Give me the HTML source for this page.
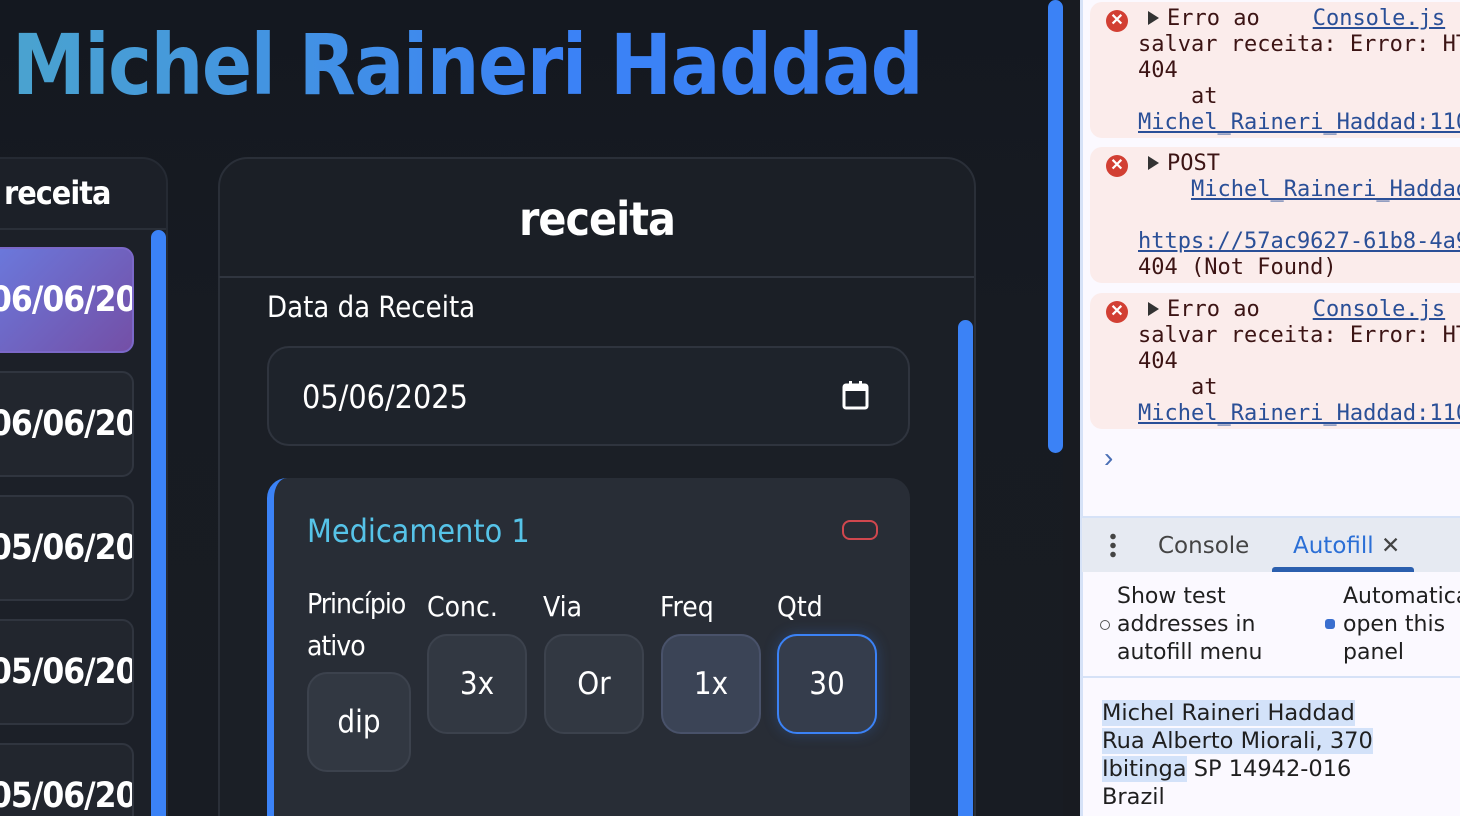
<!DOCTYPE html>
<html><head><meta charset="utf-8"><style>
*{margin:0;padding:0;box-sizing:border-box}
body{width:1460px;height:816px;overflow:hidden;position:relative;background:#13161d;font-family:"DejaVu Sans Condensed","Liberation Sans Narrow","Liberation Sans",sans-serif}
.a{position:absolute}
#left{position:absolute;left:0;top:0;width:1080px;height:816px;background:linear-gradient(180deg,#141820,#171b22 40%,#181c23);overflow:hidden}
.title{left:12px;top:16px;font-size:84px;font-weight:bold;white-space:nowrap;background:linear-gradient(90deg,#4aa3cf,#3b82f6 60%);-webkit-background-clip:text;color:transparent;letter-spacing:-1.5px;transform:scaleX(0.98);transform-origin:0 0}
.side{left:-40px;top:157px;width:208px;height:700px;border-radius:26px;background:#1c2028;border:2px solid #252a33}
.item{position:absolute;left:-20px;width:154px;height:106px;border-radius:12px;background:#22262e;border:2px solid #30353f;color:#fff;font-weight:bold;font-size:35px;line-height:102px;white-space:nowrap;text-indent:8px;letter-spacing:-1px;overflow:hidden}
.card{left:218px;top:157px;width:758px;height:700px;border-radius:30px;background:#1b1f26;border:2px solid #2a2f38}
.lbl{color:#fff;font-size:29px;position:absolute;white-space:nowrap}
.box{position:absolute;width:100px;height:100px;border-radius:20px;background:#323842;border:2px solid #3c424d;color:#fff;font-size:31px;text-align:center;line-height:96px}
.dt{position:absolute;left:1090px;width:370px;border-radius:12px 0 0 12px;background:#fbeceb;font-family:"DejaVu Sans Mono","Liberation Mono",monospace;font-size:22px;line-height:26px;color:#3c1414;white-space:nowrap;overflow:hidden}
.dt u{color:#2a4f97}
.x{position:absolute;left:16px;top:8px;width:22px;height:22px;border-radius:50%;background:#d23f33;color:#fff;font:bold 16px/22px "Liberation Sans",sans-serif;text-align:center}
.tri{display:inline-block;width:0;height:0;border-left:11px solid #333;border-top:7px solid transparent;border-bottom:7px solid transparent;margin:0 8px 0 10px}
.ui{font-family:"DejaVu Sans","Liberation Sans",sans-serif}
</style></head><body>
<div id="left">
<div class="a title">Michel Raineri Haddad</div>
<div class="a side"></div>
<div class="a" style="left:4px;top:174px;color:#fff;font-weight:bold;font-size:32px;letter-spacing:-1px">receita</div>
<div class="a" style="left:0;top:228px;width:166px;height:2px;background:#2a2f38"></div>
<div class="item" style="top:247px;background:linear-gradient(135deg,#6a7bdf,#744fa6);border-color:#7b68c8">06/06/2025</div>
<div class="item" style="top:371px">06/06/2025</div>
<div class="item" style="top:495px">05/06/2025</div>
<div class="item" style="top:619px">05/06/2025</div>
<div class="item" style="top:743px">05/06/2025</div>
<div class="a" style="left:151px;top:230px;width:15px;height:600px;border-radius:8px;background:#3b82f6"></div>
<div class="a card"></div>
<div class="a" style="left:218px;top:192px;width:758px;text-align:center;color:#fff;font-weight:bold;font-size:46px;letter-spacing:-1px">receita</div>
<div class="a" style="left:219px;top:276px;width:755px;height:2px;background:#30353f"></div>
<div class="lbl" style="left:267px;top:290px">Data da Receita</div>
<div class="a" style="left:267px;top:346px;width:643px;height:100px;border-radius:22px;background:#1e232b;border:2px solid #2f343e"></div>
<div class="lbl" style="left:302px;top:378px;font-size:32px">05/06/2025</div>
<svg class="a" style="left:842px;top:380px" width="28" height="30" viewBox="0 0 28 30"><rect x="2" y="5" width="23" height="23" rx="2" fill="none" stroke="#fff" stroke-width="3"/><rect x="2" y="5" width="23" height="6" fill="#fff"/><rect x="7" y="1" width="3" height="6" fill="#fff"/><rect x="17" y="1" width="3" height="6" fill="#fff"/></svg>
<div class="a" style="left:958px;top:320px;width:15px;height:520px;border-radius:8px;background:#3b82f6"></div>
<div class="a" style="left:267px;top:478px;width:643px;height:400px;border-radius:20px;background:#282d36;border-left:7px solid #3b82f6"></div>
<div class="lbl" style="left:307px;top:512px;color:#56c3e8;font-size:32px">Medicamento 1</div>
<div class="a" style="left:842px;top:520px;width:36px;height:20px;border-radius:8px;border:2px solid #d0474e"></div>
<div class="lbl" style="left:307px;top:583px;line-height:42px;font-size:28px;letter-spacing:-1px">Princípio<br>ativo</div>
<div class="lbl" style="left:427px;top:590px;font-size:28px">Conc.</div>
<div class="lbl" style="left:543px;top:590px;font-size:28px">Via</div>
<div class="lbl" style="left:660px;top:590px;font-size:28px">Freq</div>
<div class="lbl" style="left:777px;top:590px;font-size:28px">Qtd</div>
<div class="box" style="left:307px;top:672px;width:104px;overflow:hidden">dip</div>
<div class="box" style="left:427px;top:634px">3x</div>
<div class="box" style="left:544px;top:634px">Or</div>
<div class="box" style="left:661px;top:634px;background:#3b4456;border-color:#49526a">1x</div>
<div class="box" style="left:777px;top:634px;background:#353d4c;border-color:#3b82f6;box-shadow:0 0 14px rgba(59,130,246,.25)">30</div>
<div class="a" style="left:1048px;top:0;width:15px;height:453px;border-radius:8px;background:#3b82f6"></div>
<div class="a" style="left:1063px;top:0;width:17px;height:816px;background:#181b21"></div>
</div>
<div class="a" style="left:1080px;top:0;width:380px;height:816px;background:#fbf9ff;border-left:3px solid #d6e2f7"></div>
<div class="dt" style="top:2px;height:136px;padding:4px 0 0 48px"><div class="x">✕</div><span class="tri"></span>Erro ao &nbsp;&nbsp;&nbsp;<u>Console.js</u><br>salvar receita: Error: HTTP<br>404<br>&nbsp;&nbsp;&nbsp;&nbsp;at<br><u>Michel_Raineri_Haddad:110</u></div>
<div class="dt" style="top:147px;height:136px;padding:4px 0 0 48px"><div class="x">✕</div><span class="tri"></span>POST<br>&nbsp;&nbsp;&nbsp;&nbsp;<u>Michel_Raineri_Haddad</u><br><br><u>https://57ac9627-61b8-4a9</u><br>404 (Not Found)</div>
<div class="dt" style="top:293px;height:136px;padding:4px 0 0 48px"><div class="x">✕</div><span class="tri"></span>Erro ao &nbsp;&nbsp;&nbsp;<u>Console.js</u><br>salvar receita: Error: HTTP<br>404<br>&nbsp;&nbsp;&nbsp;&nbsp;at<br><u>Michel_Raineri_Haddad:110</u></div>
<div class="a" style="left:1104px;top:442px;color:#4a6fb5;font:28px 'Liberation Sans',sans-serif">›</div>
<div class="a" style="left:1082px;top:516px;width:378px;height:56px;background:#e6eaf2;border-top:2px solid #d6e2f7"></div>
<div class="a" style="left:1110px;top:532px;width:6px;height:27px;background:radial-gradient(circle,#444 2.5px,transparent 3px) 0 0/6px 9px"></div>
<div class="a ui" style="left:1158px;top:533px;font-size:23px;color:#444">Console</div>
<div class="a ui" style="left:1293px;top:533px;font-size:23px;color:#2b6fd6">Autofill <span style="color:#444">✕</span></div>
<div class="a" style="left:1272px;top:567px;width:142px;height:5px;border-radius:3px 3px 0 0;background:#2b5fae"></div>
<div class="a" style="left:1082px;top:676px;width:378px;height:2px;background:#d6e2f7"></div>
<div class="a ui" style="left:1117px;top:583px;font-size:22px;line-height:28px;color:#1f1f1f">Show test<br>addresses in<br>autofill menu</div>
<div class="a" style="left:1100px;top:620px;width:10px;height:10px;border-radius:50%;border:1.5px solid #555"></div>
<div class="a ui" style="left:1343px;top:583px;font-size:22px;line-height:28px;color:#1f1f1f;white-space:nowrap">Automatically<br>open this<br>panel</div>
<div class="a" style="left:1325px;top:619px;width:10px;height:10px;border-radius:3px;background:#3a6fcf"></div>
<div class="a ui" style="left:1102px;top:699px;font-size:22.5px;line-height:28px;color:#1f1f1f;white-space:nowrap"><span style="background:#d3e2f9">Michel Raineri Haddad</span><br><span style="background:#d3e2f9">Rua Alberto Miorali, 370</span><br><span style="background:#d3e2f9">Ibitinga</span> SP 14942-016<br>Brazil</div>
</body></html>
